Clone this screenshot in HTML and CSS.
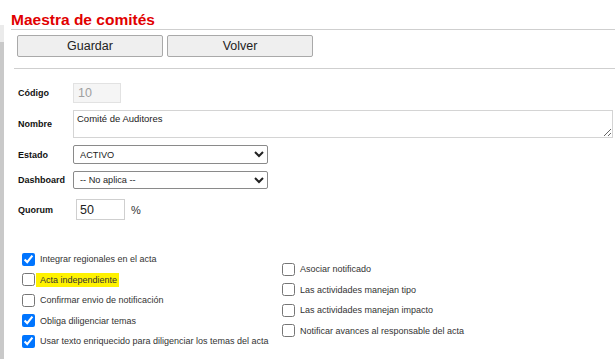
FILE: index.html
```html
<!DOCTYPE html>
<html lang="es">
<head>
	<meta charset="UTF-8">
	<title>Maestra de comités</title>
	<link rel="stylesheet" href="styles.css">
</head>
<body>
	<div class="page">
		<div class="edge"></div>
		<div class="main">
			<h1>Maestra de comités</h1>
			<div class="toolbar">
				<button type="button">Guardar</button>
				<button type="button">Volver</button>
			</div>
			<form class="fields">
				<div class="row row-codigo">
					<label>Código</label>
					<input type="text" class="codigo" value="10" disabled>
				</div>
				<div class="row row-nombre">
					<label>Nombre</label>
					<textarea class="nombre">Comité de Auditores</textarea>
				</div>
				<div class="row row-estado">
					<label>Estado</label>
					<select class="combo combo-estado">
						<option>ACTIVO</option>
						<option>INACTIVO</option>
					</select>
				</div>
				<div class="row row-dashboard">
					<label>Dashboard</label>
					<select class="combo combo-dash">
						<option>-- No aplica --</option>
					</select>
				</div>
				<div class="row row-quorum">
					<label>Quorum</label>
					<input type="text" class="quorum" value="50">
					<span class="pct">%</span>
				</div>

				<div class="options">
					<div class="col col-left">
						<label class="opt"><input type="checkbox" checked><span>Integrar regionales en el acta</span></label>
						<label class="opt"><input type="checkbox"><span class="mark">Acta independiente</span></label>
						<label class="opt"><input type="checkbox"><span>Confirmar envio de notificación</span></label>
						<label class="opt"><input type="checkbox" checked><span>Obliga diligenciar temas</span></label>
						<label class="opt"><input type="checkbox" checked><span>Usar texto enriquecido para diligenciar los temas del acta</span></label>
					</div>
					<div class="col col-right">
						<label class="opt"><input type="checkbox"><span>Asociar notificado</span></label>
						<label class="opt"><input type="checkbox"><span>Las actividades manejan tipo</span></label>
						<label class="opt"><input type="checkbox"><span>Las actividades manejan impacto</span></label>
						<label class="opt"><input type="checkbox"><span>Notificar avances al responsable del acta</span></label>
					</div>
				</div>
			</form>
		</div>
	</div>
</body>
</html>
```

FILE: styles.css
```css
body {
	font-family: "Liberation Sans", Arial, sans-serif;
	background-color: #fff;
	color: #222;
	margin: 0;
	padding: 0;
}
.page {
	display: flex;
	min-height: 359px;
}
.edge {
	width: 4px;
	margin-top: 25px;
	background: linear-gradient(#ebebeb 0 17px, #c9c9c9 17px);
}
.main {
	flex: 1;
	padding-left: 7px;
}
h1 {
	margin: 0;
	padding-top: 11px;
	font-size: 15.5px;
	line-height: 18px;
	color: #e10000;
	border-bottom: 1px solid #cfcfcf;
}
.toolbar {
	display: flex;
	gap: 4px;
	margin: 5px 0 0 6px;
	padding-bottom: 11px;
}
.toolbar button {
	width: 146px;
	height: 22px;
	padding: 0;
	font-family: inherit;
	font-size: 12.5px;
	color: #222;
	background-color: #efefef;
	border: 1px solid #a9a9a9;
	border-radius: 2px;
}
.fields {
	margin-left: 3px;
	border-top: 1px solid #cfcfcf;
	padding-top: 14px;
}
.row {
	display: flex;
	align-items: center;
	margin-bottom: 7px;
}
.row label {
	width: 55px;
	padding-left: 4px;
	font-size: 9px;
	font-weight: bold;
	color: #111;
}
.codigo {
	box-sizing: border-box;
	width: 48px;
	height: 20px;
	padding: 0 4px;
	font-family: inherit;
	font-size: 12.5px;
	color: #a0a0a0;
	background-color: #f5f5f5;
	border: 1px solid #e2e2e2;
}
.nombre {
	box-sizing: border-box;
	width: 540px;
	height: 28px;
	padding: 2px 3px;
	font-family: inherit;
	font-size: 9.5px;
	color: #222;
	border: 1px solid #d4d4d4;
	resize: both;
}
.combo {
	box-sizing: border-box;
	width: 195px;
	padding: 0 2px;
	font-family: inherit;
	font-size: 9.2px;
	color: #222;
	background-color: #fff;
	border: 1px solid #8a8a8a;
	border-radius: 2px;
}
.combo-estado {
	height: 19px;
}
.combo-dash {
	height: 18px;
}
.row-quorum {
	margin-top: 10px;
}
.quorum {
	box-sizing: border-box;
	width: 49px;
	height: 21px;
	margin-left: 3px;
	padding: 0 3px;
	font-family: inherit;
	font-size: 12.5px;
	color: #222;
	border: 1px solid #cfcfcf;
}
.pct {
	margin-left: 6px;
	font-size: 11px;
	color: #333;
}
.options {
	display: flex;
	margin-top: 29px;
}
.col {
	display: flex;
	flex-direction: column;
}
.col-left {
	width: 260px;
}
.col-right {
	padding-top: 10px;
}
.opt {
	display: flex;
	align-items: center;
	height: 20.5px;
	font-size: 9px;
	color: #333;
}
.opt input {
	width: 13px;
	height: 13px;
	margin: 0 5px 0 8px;
}
.mark {
	background-color: #fff200;
	margin-left: -4px;
	padding: 2px 2px 2px 4px;
}
```
